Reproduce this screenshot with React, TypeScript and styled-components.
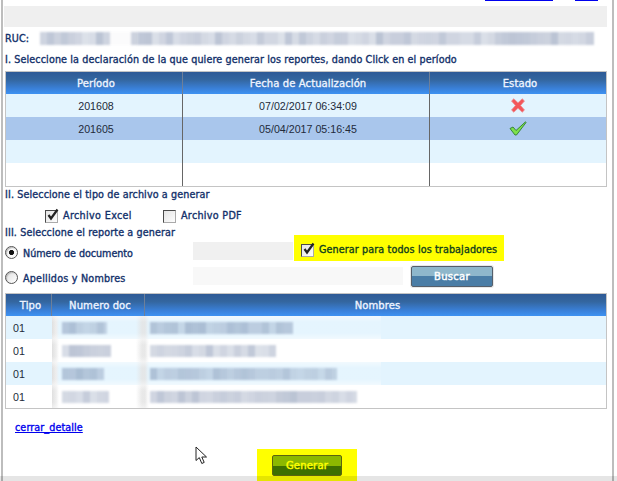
import React from 'react';
import styled, { createGlobalStyle } from 'styled-components';

const Global = createGlobalStyle`
  html, body { margin: 0; padding: 0; background: #fff; }
  body { font-family: "DejaVu Sans", "Liberation Sans", sans-serif; }
`;

const Page = styled.div`
  position: relative;
  width: 617px;
  height: 481px;
  overflow: hidden;
  background: #fff;
  box-sizing: border-box;
  padding-left: 1px;
`;
const Frame = styled.div`
  width: 613px;
  height: 481px;
  box-sizing: border-box;
  border-left: 2px solid #bdbdbd;
  border-right: 2px solid #bdbdbd;
  display: flex;
  flex-direction: column;
  padding: 0 5px 0 2px;
`;
const TopLinks = styled.div`
  height: 6px;
  flex: none;
  position: relative;
`;
const TopRule = styled.div<{ $left: number; $width: number }>`
  position: absolute;
  top: 0;
  left: ${p => p.$left}px;
  width: ${p => p.$width}px;
  height: 1px;
  background: #0000ee;
`;
const GreyBand = styled.div`
  height: 21px;
  background: #efefef;
  flex: none;
  margin-left: -1px;
`;
const RucRow = styled.div`
  height: 17px;
  margin-top: 3px;
  display: flex;
  align-items: center;
  flex: none;
`;
const Heading = styled.div<{ $mt?: number; $ls?: number }>`
  font-size: 9.6px;
  color: #12306a;
  -webkit-text-stroke: 0.35px #12306a;
  white-space: nowrap;
  letter-spacing: ${p => p.$ls ?? 0.12}px;
  line-height: 14px;
  height: 14px;
  margin-top: ${p => p.$mt ?? 0}px;
  flex: none;
`;
const RucLabel = styled(Heading)`
  width: 35px;
  flex: none;
`;
const Mosaic = styled.div`
  position: relative;
  display: flex;
  filter: blur(0.8px);
  overflow: hidden;
  flex: none;
`;
const Cell = styled.span`
  display: block;
  flex: none;
`;
const Table = styled.div<{ $mt: number }>`
  margin-top: ${p => p.$mt}px;
  border: 1px solid #c4c4c4;
  width: 602px;
  box-sizing: border-box;
  flex: none;
`;
const Row = styled.div<{ $cols: string; $bg?: string; $head?: boolean }>`
  display: grid;
  grid-template-columns: ${p => p.$cols};
  height: ${p => (p.$head ? 22 : 23)}px;
  background: ${p => p.$head ? 'linear-gradient(#2e5a96 0%, #34669f 35%, #3a80d8 75%, #3e92f2 100%)' : p.$bg ?? '#fff'};
`;
const Th = styled.div<{ $sep?: boolean }>`
  color: #eef4ff;
  font-size: 10px;
  letter-spacing: 0.1px;
  -webkit-text-stroke: 0.35px #eef4ff;
  display: flex;
  align-items: center;
  justify-content: center;
  padding-left: 4px;
  border-right: ${p => (p.$sep ? '1px solid #6d7f99' : '0')};
`;
const Td = styled.div<{ $sep?: boolean; $left?: boolean; $icon?: boolean }>`
  color: #222a3a;
  font: 10.67px "Liberation Sans", Arial, sans-serif;
  display: flex;
  align-items: center;
  justify-content: ${p => (p.$left ? 'flex-start' : 'center')};
  padding-left: ${p => (p.$left ? 7 : p.$icon ? 0 : 4)}px;
  border-right: ${p => (p.$sep ? '1px solid #666' : '0')};
`;
const DocTd = styled.div`
  position: relative;
  display: flex;
  align-items: center;
  padding-left: 10px;
  overflow: hidden;
  background: linear-gradient(90deg, #dedede 0, #ececec 4px, transparent 7px, transparent 84px, rgba(226,226,226,.85) 90px);
`;
const NameTd = styled.div`
  position: relative;
  display: flex;
  align-items: center;
  padding-left: 5px;
  overflow: hidden;
  background: linear-gradient(90deg, rgba(226,226,226,.85) 0, transparent 4px);
`;
const Haze = styled.span<{ $w: number }>`
  position: absolute;
  left: 0;
  top: 0;
  bottom: 0;
  width: ${p => p.$w}px;
  background: linear-gradient(rgba(255,255,255,.5), rgba(255,255,255,.08) 6px, rgba(255,255,255,.08) 17px, rgba(255,255,255,.5));
`;
const OptionRow = styled.div`
  display: flex;
  align-items: center;
  height: 20px;
  padding-left: 40px;
  margin-top: 4px;
  flex: none;
`;
const CheckOption = styled.div<{ $w: number }>`
  width: ${p => p.$w}px;
  display: flex;
  align-items: center;
  gap: 5px;
`;
const Box = styled.span`
  width: 11px;
  height: 11px;
  flex: none;
  border: 1px solid #4a4a4a;
  border-right-color: #aaa;
  border-bottom-color: #aaa;
  background: linear-gradient(135deg, #e4e4e4, #fdfdfd);
  position: relative;
  display: block;
`;
const CheckMark = styled.svg`
  position: absolute;
  left: 0;
  top: -3px;
  overflow: visible;
`;
const ChoiceRow = styled.div<{ $h: number; $mt?: number }>`
  display: flex;
  align-items: flex-start;
  height: ${p => p.$h}px;
  margin-top: ${p => p.$mt ?? 0}px;
  flex: none;
`;
const RadioCell = styled.div<{ $mt: number }>`
  width: 188px;
  height: 13px;
  margin-top: ${p => p.$mt}px;
  flex: none;
  display: flex;
  align-items: center;
  gap: 5px;
`;
const Radio = styled.span<{ $on?: boolean }>`
  width: 11px;
  height: 11px;
  margin-bottom: 3px;
  border-radius: 50%;
  border: 1px solid #555;
  box-shadow: inset 1px 1px 1px #bbb;
  background: ${p => p.$on ? 'radial-gradient(circle, #111 0 2.2px, #fafafa 2.9px)' : 'linear-gradient(135deg, #e0e0e0, #fff)'};
  display: block;
  flex: none;
`;
const Field = styled.div<{ $w: number; $bg: string; $mt: number }>`
  width: ${p => p.$w}px;
  height: 18px;
  margin-top: ${p => p.$mt}px;
  background: ${p => p.$bg};
  flex: none;
`;
const Highlight = styled.div`
  width: 210px;
  height: 26px;
  margin-left: 1px;
  background: #ffff00;
  display: flex;
  align-items: flex-end;
  padding: 0 0 1px 7px;
  box-sizing: border-box;
  flex: none;
`;
const HighlightInner = styled.div`
  display: flex;
  align-items: center;
  gap: 5px;
  height: 20px;
`;
const HText = styled(Heading)`
  color: #10401e;
  -webkit-text-stroke: 0.35px #10401e;
`;
const Buscar = styled.button`
  width: 82px;
  height: 21px;
  margin: 0 0 0 8px;
  padding: 0;
  flex: none;
  border: 1px solid #555f6b;
  border-radius: 2px;
  background: linear-gradient(#8fb7cb 0 50%, #4a7da6 50% 100%);
  color: #fff;
  font: 10px "DejaVu Sans", sans-serif;
  letter-spacing: 0.3px;
  -webkit-text-stroke: 0.45px #fff;
  box-shadow: 0 0 0 1px #e8e8e8;
`;
const CloseRow = styled.div`
  margin-top: 12px;
  padding-left: 10px;
  height: 14px;
  flex: none;
`;
const CloseLink = styled.a`
  color: #0000ee;
  font-size: 9.6px;
  line-height: 14px;
  text-decoration: underline;
  -webkit-text-stroke: 0.35px #0000ee;
  letter-spacing: 0.1px;
  display: block;
`;
const ActionRow = styled.div`
  flex: none;
  margin-top: 14px;
  display: flex;
  padding-left: 252px;
`;
const ActionHighlight = styled.div`
  width: 100px;
  height: 32px;
  background: #ffff00;
  display: flex;
  justify-content: center;
  align-items: flex-start;
  padding-top: 6px;
  box-sizing: border-box;
`;
const Generar = styled.button`
  width: 70px;
  height: 21px;
  padding: 0;
  border: 1px solid #5c6410;
  border-radius: 2px;
  background: linear-gradient(#8cb800 0 50%, #3e6f00 50% 100%);
  color: #ffff00;
  font: 10px "DejaVu Sans", sans-serif;
  letter-spacing: 0.2px;
  -webkit-text-stroke: 0.45px #ffff00;
`;
const Pointer = styled.svg`
  position: absolute;
  left: 195px;
  top: 446px;
`;
const BottomBand = styled.div`
  position: absolute;
  left: 0;
  right: 0;
  bottom: 0;
  height: 5px;
  background: rgba(0, 0, 0, 0.1);
`;

const rand = (seed: number) => {
  let s = seed;
  return () => {
    s = (s * 9301 + 49297) % 233280;
    return s / 233280;
  };
};

const Redacted = ({ w, h = 12, seed, gaps = [] as number[] }: { w: number; h?: number; seed: number; gaps?: number[] }) => {
  const r = rand(seed);
  const n = Math.ceil(w / 7);
  const cells = [];
  for (let i = 0; i < n; i++) {
    const a = gaps.includes(i) ? 0.02 : 0.17 + r() * 0.16;
    cells.push(
      <Cell key={i} style={{ width: 7, height: h, background: `rgba(50,75,125,${a.toFixed(2)})` }} />
    );
  }
  return <Mosaic style={{ width: w }}>{cells}</Mosaic>;
};

const XIcon = () => (
  <svg width="14" height="15" viewBox="0 0 14 15">
    <path d="M2.8 .8 L7 4.8 L11.2 .8 L13.5 3 L9.6 7.5 L13.5 12 L11.2 14.2 L7 10.2 L2.8 14.2 L.5 12 L4.4 7.5 L.5 3 Z" fill="#f3565a" stroke="#ea9295" strokeWidth="0.8" strokeLinejoin="round" />
  </svg>
);
const OkIcon = () => (
  <svg width="18" height="15" viewBox="0 0 18 15">
    <path d="M1 7.5 L4 6 L7 9.5 L16.5 .8 L17 1.6 L7.5 14 L6 14 Z" fill="#7ee04a" stroke="#2e7d32" strokeWidth="0.9" strokeLinejoin="round" />
  </svg>
);
const Check = () => (
  <CheckMark width="13" height="13" viewBox="0 0 13 13">
    <path d="M2.5 7 L5 10.5 L11.5 1.5" fill="none" stroke="#222" strokeWidth="2.2" />
  </CheckMark>
);

const C1 = '177px 247px 1fr';
const C2 = '46px 93px 1fr';

const periods = [
  { p: '201608', d: '07/02/2017 06:34:09', s: 'x', bg: '#e3f4fe' },
  { p: '201605', d: '05/04/2017 05:16:45', s: 'ok', bg: '#a9c6ec' },
  { p: '', d: '', s: '', bg: '#e3f4fe' },
  { p: '', d: '', s: '', bg: '#fff' },
];
const people = [
  { n: 45, m: 143, bg: '#e3f4fe', seed: 11 },
  { n: 49, m: 126, bg: '#fff', seed: 23 },
  { n: 42, m: 187, bg: '#e3f4fe', seed: 37 },
  { n: 47, m: 207, bg: '#fff', seed: 51 },
];

export default function App() {
  return (
    <Page>
      <Global />
      <Frame>
        <TopLinks>
          <TopRule $left={480} $width={68} />
          <TopRule $left={570} $width={23} />
        </TopLinks>
        <GreyBand />
        <RucRow>
          <RucLabel>RUC:</RucLabel>
          <Redacted w={70} h={13} seed={5} />
          <Redacted w={28} h={13} seed={8} gaps={[0, 1, 2]} />
          <Redacted w={456} h={13} seed={17} />
        </RucRow>
        <Heading $mt={6}>I. Seleccione la declaración de la que quiere generar los reportes, dando Click en el período</Heading>
        <Table $mt={4}>
          <Row $cols={C1} $head>
            <Th $sep>Período</Th>
            <Th $sep>Fecha de Actualización</Th>
            <Th>Estado</Th>
          </Row>
          {periods.map((r, i) => (
            <Row key={i} $cols={C1} $bg={r.bg}>
              <Td $sep>{r.p}</Td>
              <Td $sep>{r.d}</Td>
              <Td $icon>{r.s === 'x' ? <XIcon /> : r.s === 'ok' ? <OkIcon /> : null}</Td>
            </Row>
          ))}
        </Table>
        <Heading $mt={1}>II. Seleccione el tipo de archivo a generar</Heading>
        <OptionRow>
          <CheckOption $w={118}>
            <Box><Check /></Box>
            <Heading $ls={0.35}>Archivo Excel</Heading>
          </CheckOption>
          <CheckOption $w={100}>
            <Box />
            <Heading $ls={0.3}>Archivo PDF</Heading>
          </CheckOption>
        </OptionRow>
        <Heading>III. Seleccione el reporte a generar</Heading>
        <ChoiceRow $h={31} $mt={-5}>
          <RadioCell $mt={12}>
            <Radio $on />
            <Heading $ls={-0.03}>Número de documento</Heading>
          </RadioCell>
          <Field $w={100} $bg="#f0f0f0" $mt={7} />
          <Highlight>
            <HighlightInner>
              <Box><Check /></Box>
              <HText>Generar para todos los trabajadores</HText>
            </HighlightInner>
          </Highlight>
        </ChoiceRow>
        <ChoiceRow $h={27}>
          <RadioCell $mt={6}>
            <Radio />
            <Heading $ls={0.22}>Apellidos y Nombres</Heading>
          </RadioCell>
          <Field $w={210} $bg="#f8f8f8" $mt={1} />
          <Buscar>Buscar</Buscar>
        </ChoiceRow>
        <Table $mt={0}>
          <Row $cols={C2} $head>
            <Th $sep>Tipo</Th>
            <Th $sep>Numero doc</Th>
            <Th>Nombres</Th>
          </Row>
          {people.map((r, i) => (
            <Row key={i} $cols={C2} $bg={r.bg}>
              <Td $left>01</Td>
              <DocTd><Haze $w={93} /><Redacted w={r.n} h={12} seed={r.seed} /></DocTd>
              <NameTd><Haze $w={236} /><Redacted w={r.m} h={12} seed={r.seed + 3} /></NameTd>
            </Row>
          ))}
        </Table>
        <CloseRow><CloseLink href="#">cerrar_detalle</CloseLink></CloseRow>
        <ActionRow>
          <ActionHighlight><Generar>Generar</Generar></ActionHighlight>
        </ActionRow>
      </Frame>
      <Pointer width="13" height="20" viewBox="0 0 13 20">
        <path d="M1 1 L1 14.5 L4.3 11.6 L6.8 17.5 L9.2 16.4 L6.8 11 L11.5 11 Z" fill="#fff" stroke="#222" strokeWidth="1" strokeLinejoin="round" />
      </Pointer>
      <BottomBand />
    </Page>
  );
}
